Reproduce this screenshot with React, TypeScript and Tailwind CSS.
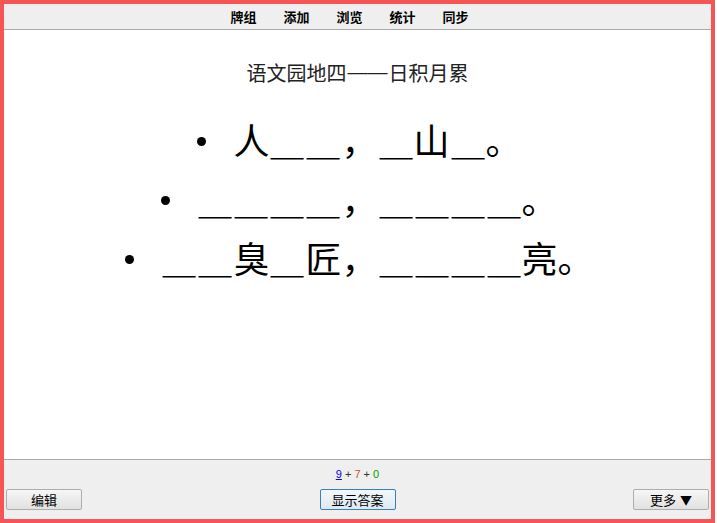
import React from "react";

const cjk = { fontFamily: '"Noto Sans CJK SC", "Noto Sans", sans-serif' };

function Bullet() {
  return (
    <span className="inline-block w-[9px] h-[9px] rounded-full bg-black ml-[-36px] mr-[27px] align-[9px]" />
  );
}

function U({ n }: { n: number }) {
  return (
    <>
      {Array.from({ length: n }).map((_, i) => (
        <span key={i} className="inline-block w-[36px] scale-x-[0.92]">
          ＿
        </span>
      ))}
    </>
  );
}

function Btn({ children, focused = false }: { children: React.ReactNode; focused?: boolean }) {
  return (
    <button
      className={
        "w-[76px] h-[21px] rounded-[2px] text-[13px] leading-none text-black flex items-center justify-center " +
        (focused
          ? "border border-[#3c7fb1] bg-gradient-to-b from-[#f2f8fc] to-[#dfe9f2]"
          : "border border-[#adadad] bg-gradient-to-b from-[#f6f6f6] to-[#e1e1e1]")
      }
      style={cjk}
    >
      {children}
    </button>
  );
}

export default function App() {
  const nav = ["牌组", "添加", "浏览", "统计", "同步"];
  return (
    <div className="w-[717px] h-[523px] bg-white">
      <div className="w-[715px] h-[523px] border-4 border-[#f65555] flex flex-col bg-white" style={cjk}>
        <div className="h-[25px] bg-[#efefef] border-b border-[#aaaaaa] box-content flex items-center justify-center gap-[27px] pr-[16px]">
          {nav.map((n) => (
            <span key={n} className="text-[13px] font-bold text-black leading-none">
              {n}
            </span>
          ))}
        </div>
        <div className="flex-1 bg-white pt-[29px]">
          <div className="text-center text-[20px] leading-[28px] text-[#222]">
            语文园地四
            <span className="relative top-[-2px] mx-[1px]" style={{ fontFamily: '"Liberation Sans", Arial, sans-serif' }}>
              ——
            </span>
            日积月累
          </div>
          <ul className="mt-[22px] pl-10 text-center text-[36px] leading-[59px] text-black">
            <li>
              <Bullet />人<U n={2} />，<U n={1} />山<U n={1} />。
            </li>
            <li>
              <Bullet /><U n={4} />，<U n={4} />。
            </li>
            <li>
              <Bullet /><U n={2} />臭<U n={1} />匠，<U n={4} />亮。
            </li>
          </ul>
        </div>
        <div className="h-[59px] bg-[#efefef] border-t border-[#aaaaaa] box-content flex flex-col">
          <div className="pt-[7px] h-[21px] text-center text-[11px] leading-[14px]" style={{ fontFamily: '"Liberation Sans", Arial, sans-serif' }}>
            <span className="text-[#0000ff] underline">9</span>
            <span className="text-[#333]"> + </span>
            <span className="text-[#c35617]">7</span>
            <span className="text-[#333]"> + </span>
            <span className="text-[#00a000]">0</span>
          </div>
          <div className="mt-[8px] px-[2px] flex items-center justify-between">
            <Btn>编辑</Btn>
            <Btn focused>显示答案</Btn>
            <Btn>
              更多<span className="ml-[4px] text-[12px]">▼</span>
            </Btn>
          </div>
        </div>
      </div>
    </div>
  );
}
